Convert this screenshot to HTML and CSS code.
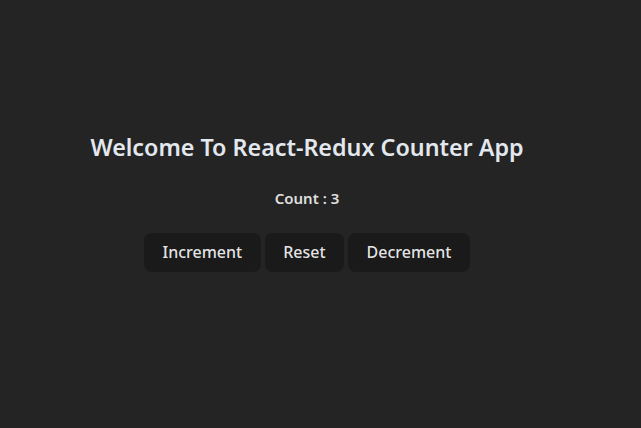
FILE: index.html
```html
<!DOCTYPE html>
<html lang="en">
<head>
<meta charset="utf-8">
<title>React-Redux Counter</title>
<link rel="stylesheet" href="styles.css">
</head>
<body>
<div class="app">
  <h1 class="title">Welcome To React-Redux Counter App</h1>
  <p class="count">Count : 3</p>
  <div class="buttons">
    <button class="btn">Increment</button>
    <button class="btn">Reset</button>
    <button class="btn">Decrement</button>
  </div>
</div>
</body>
</html>
```

FILE: styles.css
```css
html, body {
  margin: 0;
  padding: 0;
  background: #242424;
}
body {
  font-family: "Noto Sans", "Open Sans", sans-serif;
  color: rgba(255, 255, 255, 0.87);
}
.app {
  display: flex;
  flex-direction: column;
  align-items: center;
  padding-top: 132px;
  padding-right: 27px;
}
.title {
  margin: 0;
  font-size: 23.3px;
  line-height: 30px;
  font-weight: 600;
  color: #e3e7ee;
}
.count {
  margin: 26px 0 0;
  font-size: 15px;
  line-height: 20px;
  font-weight: 600;
}
.buttons {
  display: flex;
  gap: 4px;
  margin-top: 25px;
}
.btn {
  font-family: inherit;
  font-size: 16px;
  font-weight: 500;
  line-height: 21px;
  color: rgba(255, 255, 255, 0.9);
  background: #1a1a1a;
  border: 1px solid transparent;
  border-radius: 8px;
  padding: 8px 17.5px;
  cursor: pointer;
}
```
